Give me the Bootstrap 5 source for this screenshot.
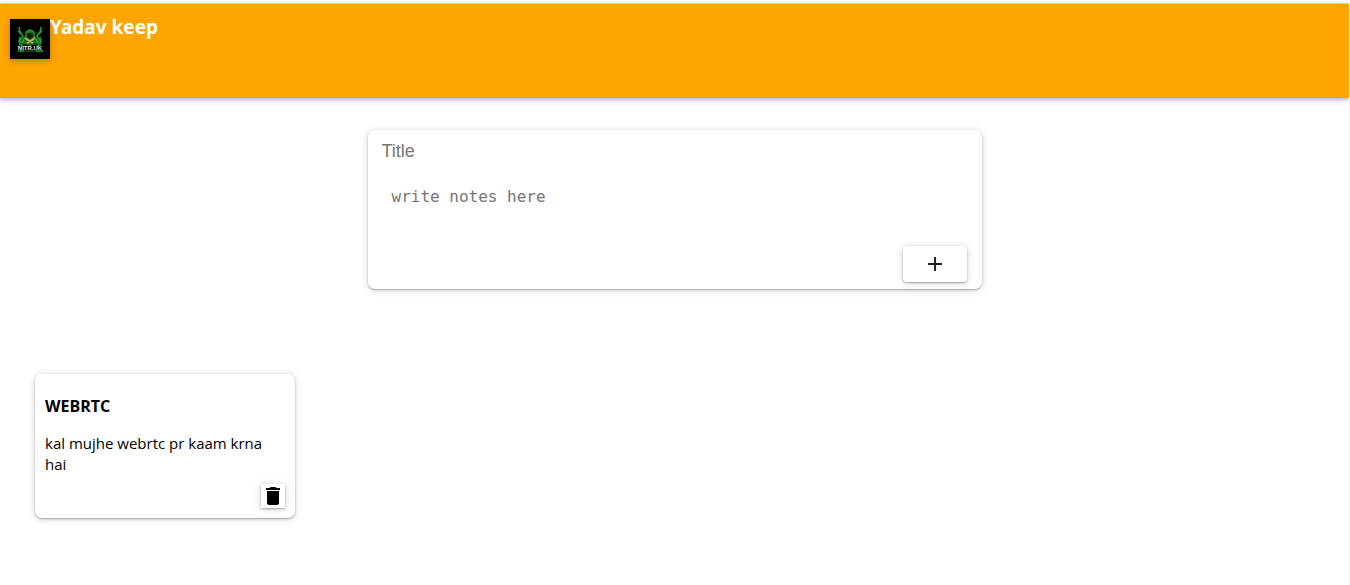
<!DOCTYPE html>
<html lang="en">
<head>
<meta charset="utf-8">
<meta name="viewport" content="width=device-width, initial-scale=1">
<title>Yadav keep</title>
<link href="https://cdn.jsdelivr.net/npm/bootstrap@5.3.0/dist/css/bootstrap.min.css" rel="stylesheet">
<style>
body{font-family:"Open Sans","Noto Sans",sans-serif;color:#000;background:#fff;border-right:1px solid #eee}
.raised{box-shadow:0 1px 2px rgba(0,0,0,.3),0 1px 8px rgba(0,0,0,.16)}
.topline{height:4px;border-bottom:1px solid #d5d8dc}
.keep-header{background:#ffa500;height:94px;padding:15px 10px;box-shadow:0 2px 2px rgba(0,0,0,.16),0 2px 10px rgba(0,0,0,.14)}
.logo{width:40px;height:40px;box-shadow:0 2px 6px rgba(0,0,0,.25)}
.brand{font-family:"Noto Sans",sans-serif;font-size:19px;line-height:16px;font-weight:700}
.composer{width:614px;max-width:94%;min-height:159px;margin:32px auto 0;padding:10px 15px 7px 14px;border-radius:7px}
.composer input,.composer textarea{border:0;outline:0;background:transparent;color:#000;resize:none}
.composer input{font:18px/22px "Liberation Sans",sans-serif;padding:0;height:22px}
.composer textarea{font:16px/20px "DejaVu Sans Mono",monospace;padding:0 10px;margin-top:25px;height:56px}
.composer ::placeholder{color:#757575;opacity:1}
.add-btn{width:64px;height:36px;border-radius:4px;background:#fff;border:0;color:#212121}
.notes{padding:85px 35px 40px}
.note{width:260px;border-radius:7px;padding:22px 10px 10px;font-size:15px;line-height:21px}
.note h1{font-size:16px;line-height:21px;font-weight:700;margin-bottom:16px}
.note p{margin-bottom:9px}
.del-btn{width:24px;height:24px;background:#fff;border:0;color:#000}
</style>
</head>
<body class="min-vh-100">
<div class="topline"></div>
<header class="keep-header d-flex align-items-start">
<svg class="logo flex-shrink-0" viewBox="0 0 40 40" role="img" aria-label="Logo">
<path fill="#000" d="M0 0h40v40H0z"/>
<path d="M9 8l1 5 3 4-3 4 1 4M8 12l3 3M31 8l-1 5-3 4 3 4-1 4M32 12l-3 3M10 18l-1 5 3 4M30 18l1 5-3 4M8 32h6M26 32h7M9 25l4 2M31 25l-4 2" fill="none" stroke="#1fa52a" stroke-width="1.400"/>
<path fill="#176f20" d="M20 10l5 3v4l4 2 1 7-5-1-5 2-5-2-5 1 1-7 4-2v-4z"/>
<path fill="#061f08" d="M17 15l3-1 3 1v3l-3 2-3-2z"/>
<path d="M16 13l4-2 4 2M14 20l-2 4M26 20l2 4" fill="none" stroke="#2fc03a"/>
<path d="M15 19l3 2 5 3M25 19l-3 2-5 3" fill="none" stroke="#dba868" stroke-width="1.600"/>
<path d="M12 32h16" stroke="#19751f"/>
<text x="20" y="31" text-anchor="middle" font-family="Liberation Sans" font-size="6" font-weight="700" fill="#e8e8e8">NITR.UK</text>
</svg>
<span class="brand text-white">Yadav keep</span>
</header>
<main>
<form class="composer raised d-flex flex-column">
<input type="text" placeholder="Title" aria-label="Title">
<textarea placeholder="write notes here" aria-label="Note"></textarea>
<button type="button" class="add-btn raised align-self-end mt-auto p-0 d-flex align-items-center justify-content-center" aria-label="Add note"><svg width="24" height="24" viewBox="0 0 24 24" fill="currentColor"><path d="M19 13h-6v6h-2v-6H5v-2h6V5h2v6h6v2z"/></svg></button>
</form>
<section class="notes d-flex flex-wrap">
<article class="note raised d-flex flex-column">
<h1>WEBRTC</h1>
<p>kal mujhe webrtc pr kaam krna hai</p>
<button type="button" class="del-btn raised align-self-end p-0 d-flex" aria-label="Delete note"><svg width="24" height="24" viewBox="0 0 24 24" fill="currentColor"><path d="M6 19c0 1.100.9 2 2 2h8c1.100 0 2-.9 2-2V7H6v12zM19 4h-3.500l-1-1h-5l-1 1H5v2h14V4z"/></svg></button>
</article>
</section>
</main>
<script src="https://cdn.jsdelivr.net/npm/bootstrap@5.3.0/dist/js/bootstrap.bundle.min.js"></script>
</body>
</html>
